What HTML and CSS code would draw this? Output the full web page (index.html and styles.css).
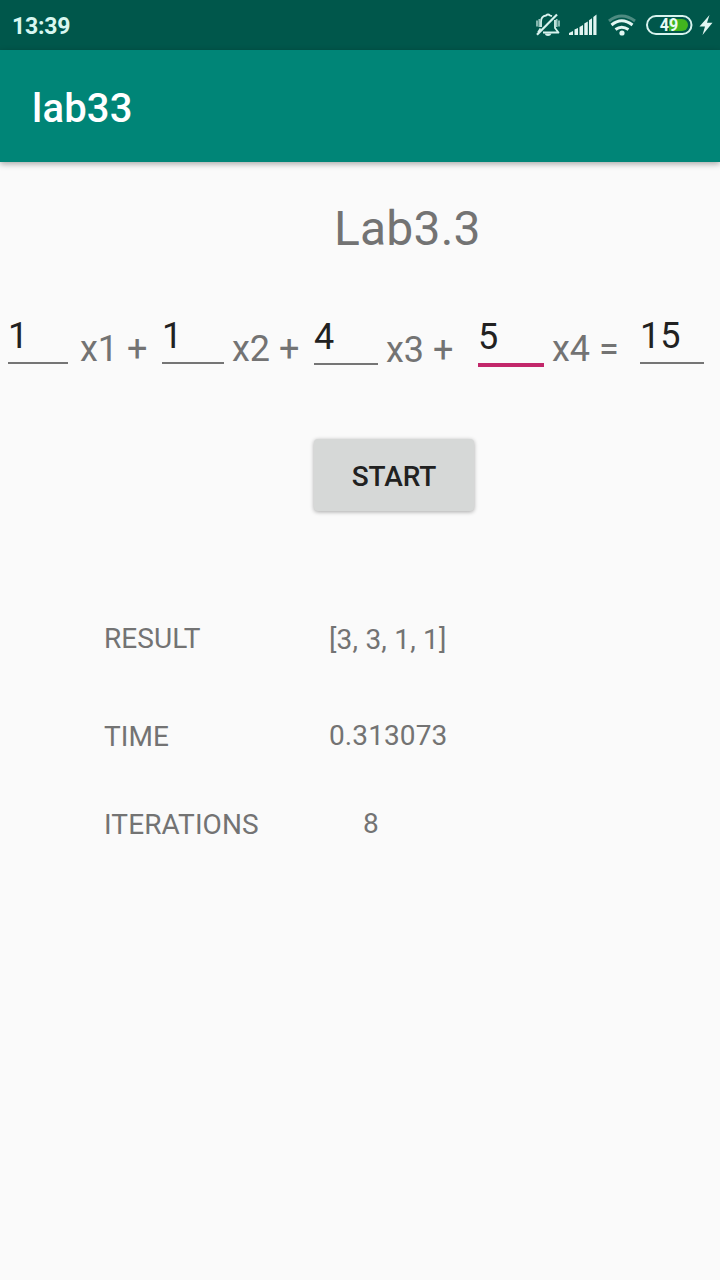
FILE: index.html
```html
<!DOCTYPE html>
<html lang="en"><head><meta charset="utf-8"><title>lab33</title><link rel="stylesheet" href="styles.css"></head>
<body>
<header class="status"><span class="clock">13:39</span>
<svg class="indicators" viewBox="530 0 190 50" width="190" height="50" aria-hidden="true">
<g fill="none" stroke="#d8f3ee" stroke-width="1.8" stroke-linejoin="round">
<path d="M541 27V22Q541 16 546 15.500Q548 13.500 550 15.500L552 16.200M555 20V28L558.500 32.500H543"/><path d="M537 34.800L557 14.500" stroke-width="2.200"/><path d="M540.500 28.500L538 32.500"/></g>
<path d="M544.500 33.500h7q-1 2.500-3.500 2.500t-3.500-2.500z" fill="#d8f3ee"/>
<path d="M537 20.500v6M539.300 19v8M556.700 19v8M559 20.500v6" stroke="#9cc9c1" stroke-width="1.700"/>
<g fill="#e2f6f2"><path d="M569 35v-2l4-2v4zM574.500 35v-5.500l3.500-1.500v7zM579.500 35v-8l3.500-2v10zM584.300 35V23.500l3.500-2V35zM589 35V20.300l3-2V35zM593.300 35V17l3.200-2.500V35z"/></g>
<g fill="none" stroke-width="3"><path d="M609 21Q621.500 11 635 21" stroke="#4d8b81"/><path d="M611.500 25Q621.500 16.500 632.500 25M615.500 29.500Q621.500 25 628.500 29.500" stroke="#e2f6f2"/></g><circle cx="622" cy="33" r="2.600" fill="#e2f6f2"/>
<rect x="647" y="16" width="44.500" height="18" rx="9" fill="none" stroke="#d8f3ee" stroke-width="2"/>
<path d="M669 19h13a6 6 0 0 1 0 12h-13z" fill="#42b51f"/><text x="659.800" y="31.300" textLength="18.500" lengthAdjust="spacingAndGlyphs" class="charge">49</text>
<path d="M709.500 15L699.500 26.500h5.500l-2.500 8.500L712.500 22.800h-5.500z" fill="#e2f6f2"/></svg></header>
<div class="appbar"><h1>lab33</h1></div>
<main>
<h2 class="title">Lab3.3</h2>
<form class="equation">
<input class="coef a" value="1"><label class="term ta">x1 +</label>
<input class="coef b" value="1"><label class="term tb">x2 +</label>
<input class="coef c" value="4"><label class="term tc">x3 +</label>
<input class="coef d" value="5"><label class="term td">x4 =</label>
<input class="coef e" value="15"></form>
<button class="start">START</button>
<dl class="results"><dt>RESULT</dt><dd class="solution">[3, 3, 1, 1]</dd><dt>TIME</dt><dd class="elapsed">0.313073</dd><dt>ITERATIONS</dt><dd class="count">8</dd></dl>
</main></body></html>
```
FILE: styles.css
```css
*{box-sizing:border-box}
body{margin:0;height:1280px;background:#fafafa;font-family:Roboto,sans-serif;color:#737373;overflow:hidden}
.status{height:50px;background:#00574b;display:flex;justify-content:space-between;padding-left:12px;color:#d8f7f0}
.clock{font-size:23px;font-weight:700;line-height:54px;letter-spacing:-.2px}
.charge{font:700 17.5px Roboto,sans-serif;fill:#e9faf5}
.appbar{height:112px;background:#008577;box-shadow:0 2px 6px #0005;padding:33px 32px 0;color:#fff}
h1{font-size:40px;font-weight:500;line-height:52px;margin:0;letter-spacing:.2px}
.title{font-size:48px;font-weight:400;line-height:56px;margin:39px 0 0 334px;letter-spacing:.2px}
.equation{display:flex;height:76px;margin-top:45px;padding-left:8px;align-items:flex-start}
.coef{font:36px/42px Roboto,sans-serif;color:#212121;background:none;border:0;border-bottom:2px solid #757575;padding:12px 0 5px;height:62px;outline:0;border-radius:0}
.term{font-size:36px;line-height:42px;margin-top:26px;white-space:nowrap}
.a{width:60px}
.ta{width:82px;margin-left:12px}
.b{width:62px}
.tb{width:82px;margin-left:8px}
.c{width:64px;height:63px;padding-top:13px}
.tc{width:92px;margin-left:8px;margin-top:27px}
.d{width:66px;height:65px;padding-top:13px;border-bottom:4px solid #c2276a}
.td{width:88px;margin-left:8px}
.e{width:64px}
.start{display:block;width:160px;height:72px;margin:61px 0 0 314px;padding:3px 0 0;border:0;border-radius:4px;background:#d6d8d7;box-shadow:0 1px 4px #0005;font:500 28px Roboto,sans-serif;letter-spacing:-.1px;color:#212121}
.results{display:grid;grid-template-columns:225px 1fr;grid-template-rows:98px 88px 40px;margin:111px 0 0 104px;font-size:28px;line-height:33px;letter-spacing:.1px}
dd{margin:0}
.solution{padding-top:1px;letter-spacing:.2px}
.elapsed{margin-top:-1px}
.count{margin-top:-1px;padding-left:34px}
```
